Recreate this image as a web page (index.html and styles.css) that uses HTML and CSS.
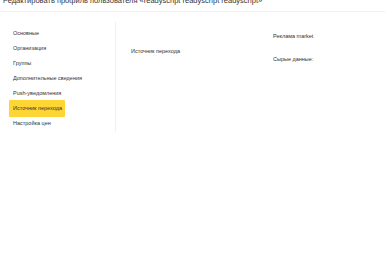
FILE: index.html
```html
<!DOCTYPE html>
<html lang="ru">
<head>
    <meta charset="UTF-8">
    <meta name="viewport" content="width=device-width, initial-scale=1.0">
    <title>Редактировать профиль пользователя</title>
    <link rel="stylesheet" href="styles.css">
</head>
<body>
    <h1 class="page-title">Редактировать профиль пользователя «readyscript readyscript readyscript»</h1>

    <div class="card">
        <ul class="tabs">
            <li class="tab">Основные</li>
            <li class="tab">Организация</li>
            <li class="tab">Группы</li>
            <li class="tab">Дополнительные сведения</li>
            <li class="tab">Push-уведомления</li>
            <li class="tab active">Источник перехода</li>
            <li class="tab">Настройка цен</li>
        </ul>

        <div class="content">
            <div class="section-title">Источник перехода</div>
            <div class="source-info">
                <div class="source-name">Реклама market</div>
                <div class="raw-label">Сырые данные:</div>
            </div>
        </div>
    </div>
</body>
</html>
```

FILE: styles.css
```css
* {
    margin: 0;
    padding: 0;
    box-sizing: border-box;
}

body {
    font-family: "Liberation Sans", Arial, sans-serif;
    color: #333;
    background: #fff;
    overflow: hidden;
}

.page-title {
    font-size: 7.5px;
    font-weight: normal;
    line-height: 10px;
    margin-top: -4px;
    padding-left: 3px;
    white-space: nowrap;
}

.card {
    display: flex;
    margin-top: 5px;
    border-top: 1px solid #f0f0f0;
    min-height: 260px;
}

.tabs {
    list-style: none;
    width: 116px;
    margin-top: 10px;
    padding-top: 4px;
    height: 110px;
    border-right: 1px solid #f0f0f0;
}

.tab {
    font-size: 5.5px;
    line-height: 15px;
    height: 15px;
    margin-left: 9px;
    padding: 0 4px;
    width: fit-content;
    white-space: nowrap;
}

.tab.active {
    background: #fdd535;
    height: 17px;
    line-height: 17px;
    margin-bottom: -1px;
    margin-top: -1px;
    padding-right: 3px;
    border-radius: 1px;
}

.content {
    display: flex;
    padding-left: 15px;
    padding-top: 20px;
    font-size: 5.5px;
}

.section-title {
    width: 142px;
    margin-top: 16px;
}

.source-name {
    line-height: 8px;
}

.raw-label {
    margin-top: 15px;
    line-height: 8px;
}
```
